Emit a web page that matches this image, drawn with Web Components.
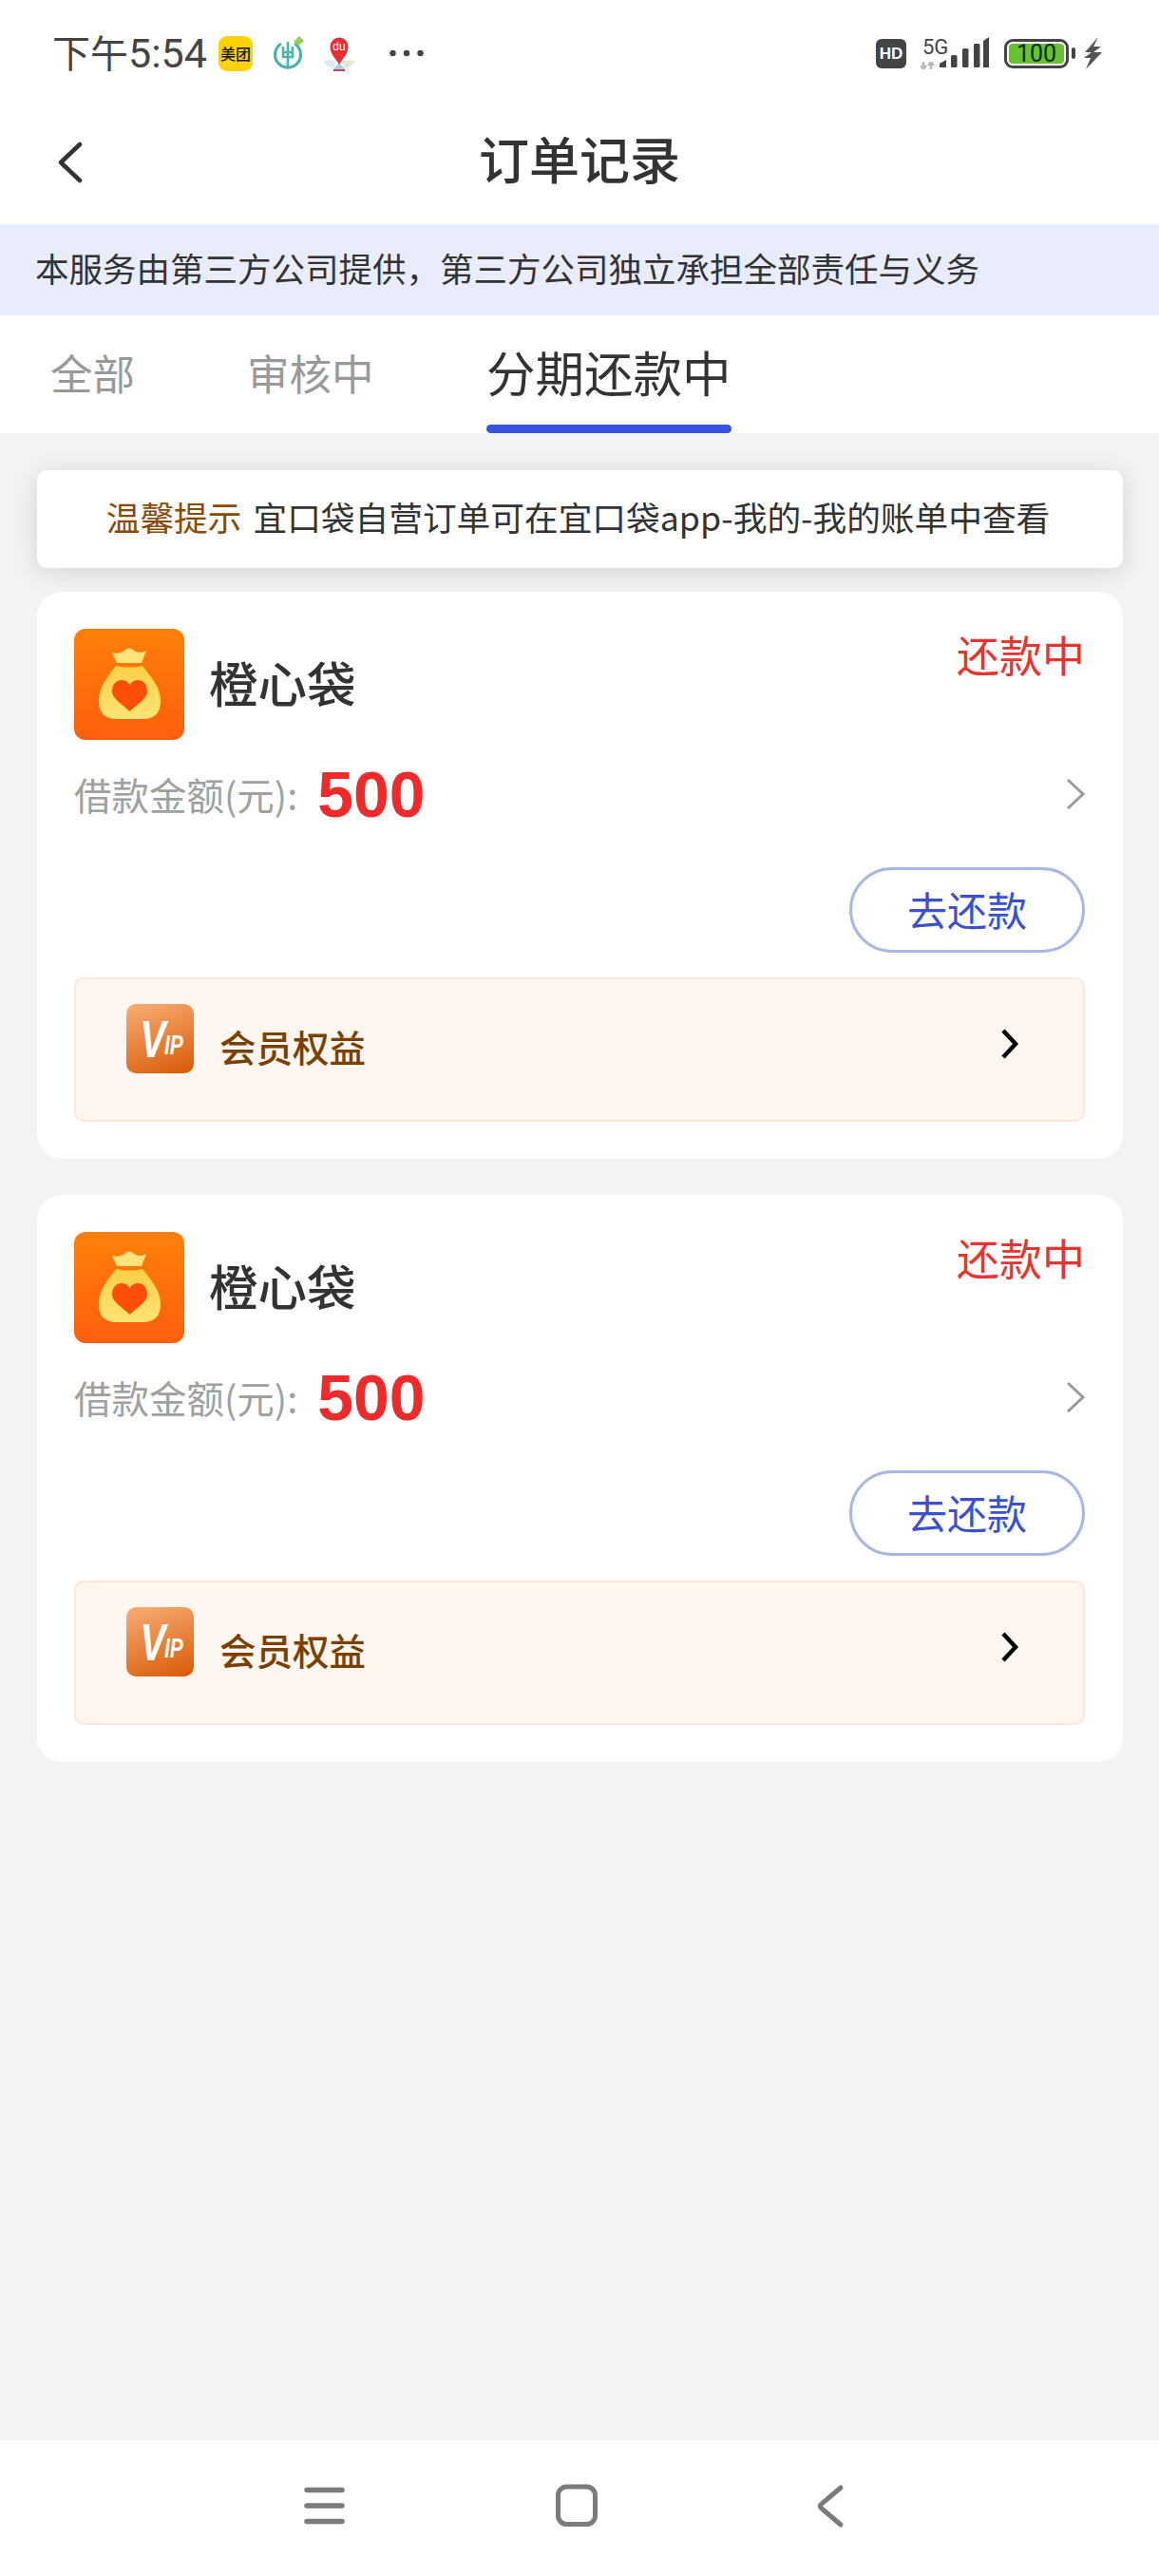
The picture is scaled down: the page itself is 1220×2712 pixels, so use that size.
<!DOCTYPE html>
<html lang="zh">
<head>
<meta charset="utf-8">
<title>订单记录</title>
<style>
  html, body { margin: 0; padding: 0; }
  body {
    width: 1220px;
    height: 2712px;
    display: flex;
    flex-direction: column;
    background: #fff;
    font-family: "Noto Sans CJK SC", "Noto Sans", sans-serif;
    color: #333;
    overflow: hidden;
  }
  .list { flex: 1; background: #f3f3f3; padding: 39px 38px 0 39px; display: flex; flex-direction: column; }
</style>
</head>
<body>
  <status-bar></status-bar>
  <title-bar>订单记录</title-bar>
  <notice-strip>本服务由第三方公司提供，第三方公司独立承担全部责任与义务</notice-strip>
  <order-tabs>
    <tab-item style="--w:207px">全部</tab-item>
    <tab-item style="--w:252px">审核中</tab-item>
    <tab-item active>分期还款中</tab-item>
  </order-tabs>
  <div class="list">
    <tip-card>宜口袋自营订单可在宜口袋app-我的-我的账单中查看</tip-card>
    <order-card name="橙心袋" status="还款中" amount="500"></order-card>
    <order-card name="橙心袋" status="还款中" amount="500"></order-card>
  </div>
  <nav-bar></nav-bar>

<script>
const SANS = `"Noto Sans CJK SC", "Noto Sans", sans-serif`;

class StatusBar extends HTMLElement {
  constructor() {
    super();
    this.attachShadow({ mode: "open" }).innerHTML = `
      <style>
        :host { display: flex; align-items: center; height: 100px; padding: 12px 60px 0 55px; box-sizing: border-box; color: #444; }
        .time { font: 400 40px/1 ${SANS}; width: 163px; margin-right: 12px; white-space: nowrap; }
        .time b { font: 400 43px/1 Roboto, sans-serif; }
        .mt { width: 36px; height: 37px; border-radius: 9px; background: #ffd100; display: flex; align-items: center; justify-content: center; font: 500 16px/1 ${SANS}; color: #111; white-space: nowrap; margin-right: 19px; }
        svg { display: block; flex: none; }
        .right { margin-left: auto; display: flex; align-items: center; height: 36px; }
        .hd { width: 32px; height: 31px; border-radius: 6px; background: #444; color: #fff; font: 700 17px/31px "Liberation Sans", sans-serif; text-align: center; margin-right: 15px; }
        .net { width: 20px; height: 33px; display: flex; flex-direction: column; justify-content: space-between; }
        .net span { font: 400 22px/20px Roboto, sans-serif; padding-left: 2px; white-space: nowrap; }
        .bat { width: 68px; height: 31px; box-sizing: border-box; border: 3px solid #444; border-radius: 9px; padding: 2px; margin-left: 16px; }
        .bat span { display: block; height: 100%; border-radius: 4px; background: #66c22f; color: #0c2a05; font: 400 25px/21px Roboto, sans-serif; text-align: center; }
        .tip { width: 4px; height: 12px; border-radius: 2px; background: #444; margin: 0 9px 0 3px; }
      </style>
      <span class="time">下午<b>5:54</b></span>
      <span class="mt">美团</span>
      <svg width="36" height="37" viewBox="0 0 36 37" style="margin-right:18px">
        <path d="M11 8 A13.500 13.500 0 1 0 25 8" fill="none" stroke="#4bb3a9" stroke-width="3.200"/>
        <path d="M18 6 V32 M13 11 V22 H23 V11 M13 17 H23" fill="none" stroke="#4bb3a9" stroke-width="2.600"/>
        <path d="M24 6 L30 0 L35 5 L29 10 Z" fill="#8fd14f"/>
      </svg>
      <svg width="36" height="37" viewBox="0 0 36 37" style="margin-right:35px">
        <path d="M1 26 Q10 24 15 27 L13 34 Q5 33 1 26Z" fill="#dfe9ef"/>
        <path d="M35 26 Q26 24 21 27 L23 34 Q31 33 35 26Z" fill="#e6e8cf"/>
        <path d="M18 28 L12 35 H24 Z" fill="#a8cbe6"/>
        <path d="M12 35 H24 V37 H12Z" fill="#b34a5a"/>
        <path d="M18 30 C14 23 8.500 19 8.500 11 A9.500 9.500 0 0 1 27.500 11 C27.500 19 22 23 18 30Z" fill="#ee2c34"/>
        <text x="18" y="15" text-anchor="middle" font-family="Liberation Sans, sans-serif" font-size="12" fill="#fff">du</text>
      </svg>
      <svg width="36" height="8" viewBox="0 0 36 8">
        <circle cx="3.500" cy="4" r="3.200" fill="#444"/><circle cx="18" cy="4" r="3.200" fill="#444"/><circle cx="32.500" cy="4" r="3.200" fill="#444"/>
      </svg>
      <div class="right">
        <span class="hd">HD</span>
        <div class="net">
          <span>5G</span>
          <svg width="16" height="8" viewBox="970 65 16 8"><path d="M973 65 V73 M970 69 L973 73 L976 69 M981 73 V65 M978 69 L981 65 L984 69" stroke="#bbb" stroke-width="2.500" fill="none"/></svg>
        </div>
        <svg width="52" height="33" viewBox="989 41 52 33" style="margin-top:-1px">
          <path d="M989 69 L996 65 V73 H989Z" fill="#444"/>
          <rect x="1001" y="60" width="6.500" height="13" rx="1.500" fill="#444"/>
          <rect x="1013" y="53" width="6.500" height="20" rx="1.500" fill="#444"/>
          <rect x="1025" y="48" width="6.500" height="25" rx="1.500" fill="#444"/>
          <path d="M1035 45 L1041 41 V73 H1035Z" fill="#444"/>
        </svg>
        <div class="bat"><span>100</span></div>
        <div class="tip"></div>
        <svg width="19" height="34" viewBox="1141 40 19 34"><path d="M1156 40 L1142 56 H1149 L1141 62 H1148 L1143 74 L1160 56 H1151 L1159 50 H1151Z" fill="#555"/></svg>
      </div>`;
  }
}

class TitleBar extends HTMLElement {
  constructor() {
    super();
    this.attachShadow({ mode: "open" }).innerHTML = `
      <style>
        :host { display: flex; align-items: center; justify-content: center; position: relative; height: 136px; font: 500 53px/1 ${SANS}; color: #333; box-sizing: border-box; padding-bottom: 3px; }
        svg { position: absolute; left: 60px; top: 49px; }
      </style>
      <svg width="28" height="44" viewBox="0 0 28 44"><path d="M24 3 L4 22 L24 41" fill="none" stroke="#333" stroke-width="4.500" stroke-linecap="round" stroke-linejoin="round"/></svg>
      <slot></slot>`;
  }
}

class NoticeStrip extends HTMLElement {
  constructor() {
    super();
    this.attachShadow({ mode: "open" }).innerHTML = `
      <style>
        :host { display: flex; align-items: center; height: 96px; box-sizing: border-box; padding: 0 0 5px 37px; background: #e9ecfb; font: 400 35.500px/1 ${SANS}; color: #333; white-space: nowrap; }
      </style>
      <slot></slot>`;
  }
}

class OrderTabs extends HTMLElement {
  constructor() {
    super();
    this.attachShadow({ mode: "open" }).innerHTML = `
      <style>
        :host { display: flex; height: 124px; padding-left: 53px; background: #fff; }
      </style>
      <slot></slot>`;
  }
}

class TabItem extends HTMLElement {
  constructor() {
    super();
    this.attachShadow({ mode: "open" }).innerHTML = `
      <style>
        :host { display: flex; flex-direction: column; align-items: flex-start; height: 124px; width: var(--w, auto); color: #999; font: 400 44.500px/1 ${SANS}; white-space: nowrap; }
        .t { height: 115px; display: flex; align-items: center; padding-top: 6px; box-sizing: border-box; }
        .bar { display: none; height: 9px; width: 100%; border-radius: 5px; background: #3553dc; }
        :host([active]) { color: #333; font-size: 51.500px; }
        :host([active]) .t { padding-top: 2px; }
        :host([active]) .bar { display: block; }
      </style>
      <div class="t"><slot></slot></div><div class="bar"></div>`;
  }
}

class TipCard extends HTMLElement {
  constructor() {
    super();
    this.attachShadow({ mode: "open" }).innerHTML = `
      <style>
        :host { display: flex; align-items: center; justify-content: center; height: 103px; box-sizing: border-box; padding: 0 4px 5px 0; border-radius: 11px; background: #fff; box-shadow: 0 4px 26px rgba(0,0,0,.13); font: 400 35.700px/1 ${SANS}; color: #333; white-space: nowrap; position: relative; }
        b { font-weight: 400; color: #8a4a06; margin-right: 12px; }
      </style>
      <b>温馨提示</b><slot></slot>`;
  }
}

class OrderCard extends HTMLElement {
  constructor() {
    super();
    const name = this.getAttribute("name");
    const status = this.getAttribute("status");
    const amount = this.getAttribute("amount");
    this.attachShadow({ mode: "open" }).innerHTML = `
      <style>
        :host { display: block; position: relative; margin-top: 25px; margin-bottom: 13px; background: #fff; border-radius: 26px; padding: 39px 40px 39px 39px; }
        .head { display: flex; height: 117px; }
        .name { font: 500 51.500px/1 ${SANS}; color: #333; margin: 30px 0 0 26px; }
        .status { margin-left: auto; font: 400 45px/60px ${SANS}; color: #e8332e; margin-top: -3px; }
        .amount { display: flex; align-items: center; height: 64px; margin-top: 25px; margin-bottom: 2px; color: #a0a0a0; font: 400 39.500px/1 ${SANS}; }
        .amount b { font: 700 68px/1 "Liberation Sans", sans-serif; color: #ee2a2a; margin-left: 21px; }
        .amount svg { margin-left: auto; margin-right: -2px; }
        .actions { display: flex; justify-content: flex-end; margin-top: 45px; }
        .btn { width: 248px; height: 90px; box-sizing: border-box; padding-bottom: 2px; border: 3px solid #a9b6e6; border-radius: 45px; color: #3a50d0; font: 400 42px/1 ${SANS}; display: flex; align-items: center; justify-content: center; }
        vip-row { margin-top: 26px; }
      </style>
      <div class="head">
        <svg width="116" height="117" viewBox="0 0 116 117">
          <defs>
            <linearGradient id="o" x1="0" y1="0" x2="0" y2="1"><stop offset="0" stop-color="#ff800a"/><stop offset="1" stop-color="#ff5f0c"/></linearGradient>
            <linearGradient id="y" x1="0" y1="0" x2="0" y2="1"><stop offset="0" stop-color="#ffcf45"/><stop offset="1" stop-color="#ffe475"/></linearGradient>
          </defs>
          <rect width="116" height="117" rx="12" fill="url(#o)"/>
          <path d="M40 25 Q48 27 53 23 Q58 18 63 23 Q69 27 76 23 L71 36 H45Z" fill="#ffe27a"/>
          <path d="M44 39 Q58 42 72 39 C82 52 91 62 91 76 Q91 95 72 95 H45 Q26 95 26 76 C26 62 34 52 44 39Z" fill="url(#y)"/>
          <path d="M58.500 59 C54 51 40 52 40 66 C40 74 52 80 58.500 87 C65 80 77 74 77 66 C77 52 63 51 58.500 59Z" fill="#ff4d0a"/>
        </svg>
        <div class="name">${name}</div>
        <div class="status">${status}</div>
      </div>
      <div class="amount">借款金额(元):<b>${amount}</b>
        <svg width="24" height="36" viewBox="0 0 24 36"><path d="M4 3 L20 18 L4 33" fill="none" stroke="#999" stroke-width="3"/></svg>
      </div>
      <div class="actions"><div class="btn">去还款</div></div>
      <vip-row>会员权益</vip-row>`;
  }
}

class VipRow extends HTMLElement {
  constructor() {
    super();
    this.attachShadow({ mode: "open" }).innerHTML = `
      <style>
        :host { display: flex; align-items: flex-start; height: 152px; box-sizing: border-box; padding: 26px 66px 0 53px; background: #fff6f0; border: 2.500px solid #fbe8dc; border-radius: 10px; }
        .ic { width: 71px; height: 73px; border-radius: 10px; background: linear-gradient(160deg, #f8ae76, #d85a06); color: #fff; display: flex; align-items: center; justify-content: center; font: italic 700 14px/1 "Liberation Sans", sans-serif; overflow: hidden; }
        .ic b { font-size: 56px; transform: scaleX(.72); transform-origin: right center; margin-left: -10px; margin-right: -1px; }
        .ic i { font-size: 29px; transform: scaleX(.72); transform-origin: left center; margin: 13px -10px 0 0; }
        .t { margin: 19px 0 0 27px; font: 500 38.500px/50px ${SANS}; color: #7a4000; }
        svg { margin: 25px 0 0 auto; }
      </style>
      <div class="ic"><b>V</b><i>IP</i></div>
      <div class="t"><slot></slot></div>
      <svg width="22" height="34" viewBox="0 0 22 34"><path d="M4 3 L17 17 L4 31" fill="none" stroke="#000" stroke-width="4.500" stroke-linejoin="miter"/></svg>`;
  }
}

class NavBar extends HTMLElement {
  constructor() {
    super();
    this.attachShadow({ mode: "open" }).innerHTML = `
      <style>
        :host { display: block; height: 143px; background: #fff; }
        svg { display: block; }
      </style>
      <svg width="1220" height="143" viewBox="0 2569 1220 143">
        <path d="M323 2621.500 H360 M323 2638 H360 M323 2654.500 H360" stroke="#7b7b7b" stroke-width="5.500" stroke-linecap="round"/>
        <rect x="587.500" y="2618" width="39" height="39.500" rx="9" fill="none" stroke="#7b7b7b" stroke-width="5"/>
        <path d="M885 2619 L865 2636 Q861.500 2638 865 2641 L885 2658" fill="none" stroke="#7b7b7b" stroke-width="5" stroke-linecap="round"/>
      </svg>`;
  }
}

customElements.define("status-bar", StatusBar);
customElements.define("title-bar", TitleBar);
customElements.define("notice-strip", NoticeStrip);
customElements.define("order-tabs", OrderTabs);
customElements.define("tab-item", TabItem);
customElements.define("tip-card", TipCard);
customElements.define("vip-row", VipRow);
customElements.define("order-card", OrderCard);
customElements.define("nav-bar", NavBar);
</script>
</body>
</html>
